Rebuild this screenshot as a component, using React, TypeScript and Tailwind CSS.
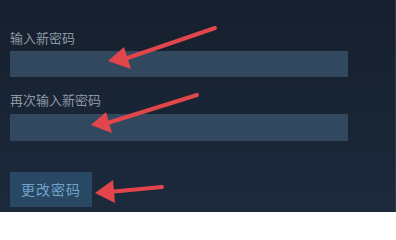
import React from 'react';

const font = { fontFamily: '"Noto Sans CJK SC", "Noto Sans", sans-serif' };

function Arrow({ tail, tip, left, right }: { tail: [number, number]; tip: [number, number]; left: [number, number]; right: [number, number] }) {
  const mx = (left[0] + right[0]) / 2;
  const my = (left[1] + right[1]) / 2;
  return (
    <g>
      <line x1={tail[0]} y1={tail[1]} x2={mx} y2={my} stroke="#e2464b" strokeWidth={4} strokeLinecap="round" />
      <polygon points={`${tip[0]},${tip[1]} ${left[0]},${left[1]} ${right[0]},${right[1]}`} fill="#e2464b" />
    </g>
  );
}

export default function App() {
  return (
    <div className="relative w-[396px] h-[212px] overflow-hidden bg-gradient-to-b from-[#161f2d] to-[#1c2a3c] border-r border-[#2c3a4c]" style={font}>
      <div className="flex flex-col pl-[10px] pt-[29px]">
        <label className="text-[13px] leading-[18px] text-[#8d99a6]">输入新密码</label>
        <div className="mt-[4px] w-[338px] h-[26px] bg-[#32485f]" />
        <label className="mt-[14px] text-[13px] leading-[18px] text-[#8d99a6]">再次输入新密码</label>
        <div className="mt-[5px] w-[338px] h-[27px] bg-[#32485f]" />
        <button className="mt-[31px] w-[82px] h-[35px] bg-[#284863] text-[14px] tracking-[1px] text-[#72a2cb]">更改密码</button>
      </div>
      <svg className="absolute inset-0 pointer-events-none" width={396} height={212}>
        <Arrow tail={[215, 28]} tip={[108, 61]} left={[124, 47]} right={[131, 69]} />
        <Arrow tail={[197, 95]} tip={[91, 125]} left={[106, 112]} right={[112, 133]} />
        <Arrow tail={[162, 187]} tip={[95, 193]} left={[113, 180]} right={[115, 203]} />
      </svg>
    </div>
  );
}
